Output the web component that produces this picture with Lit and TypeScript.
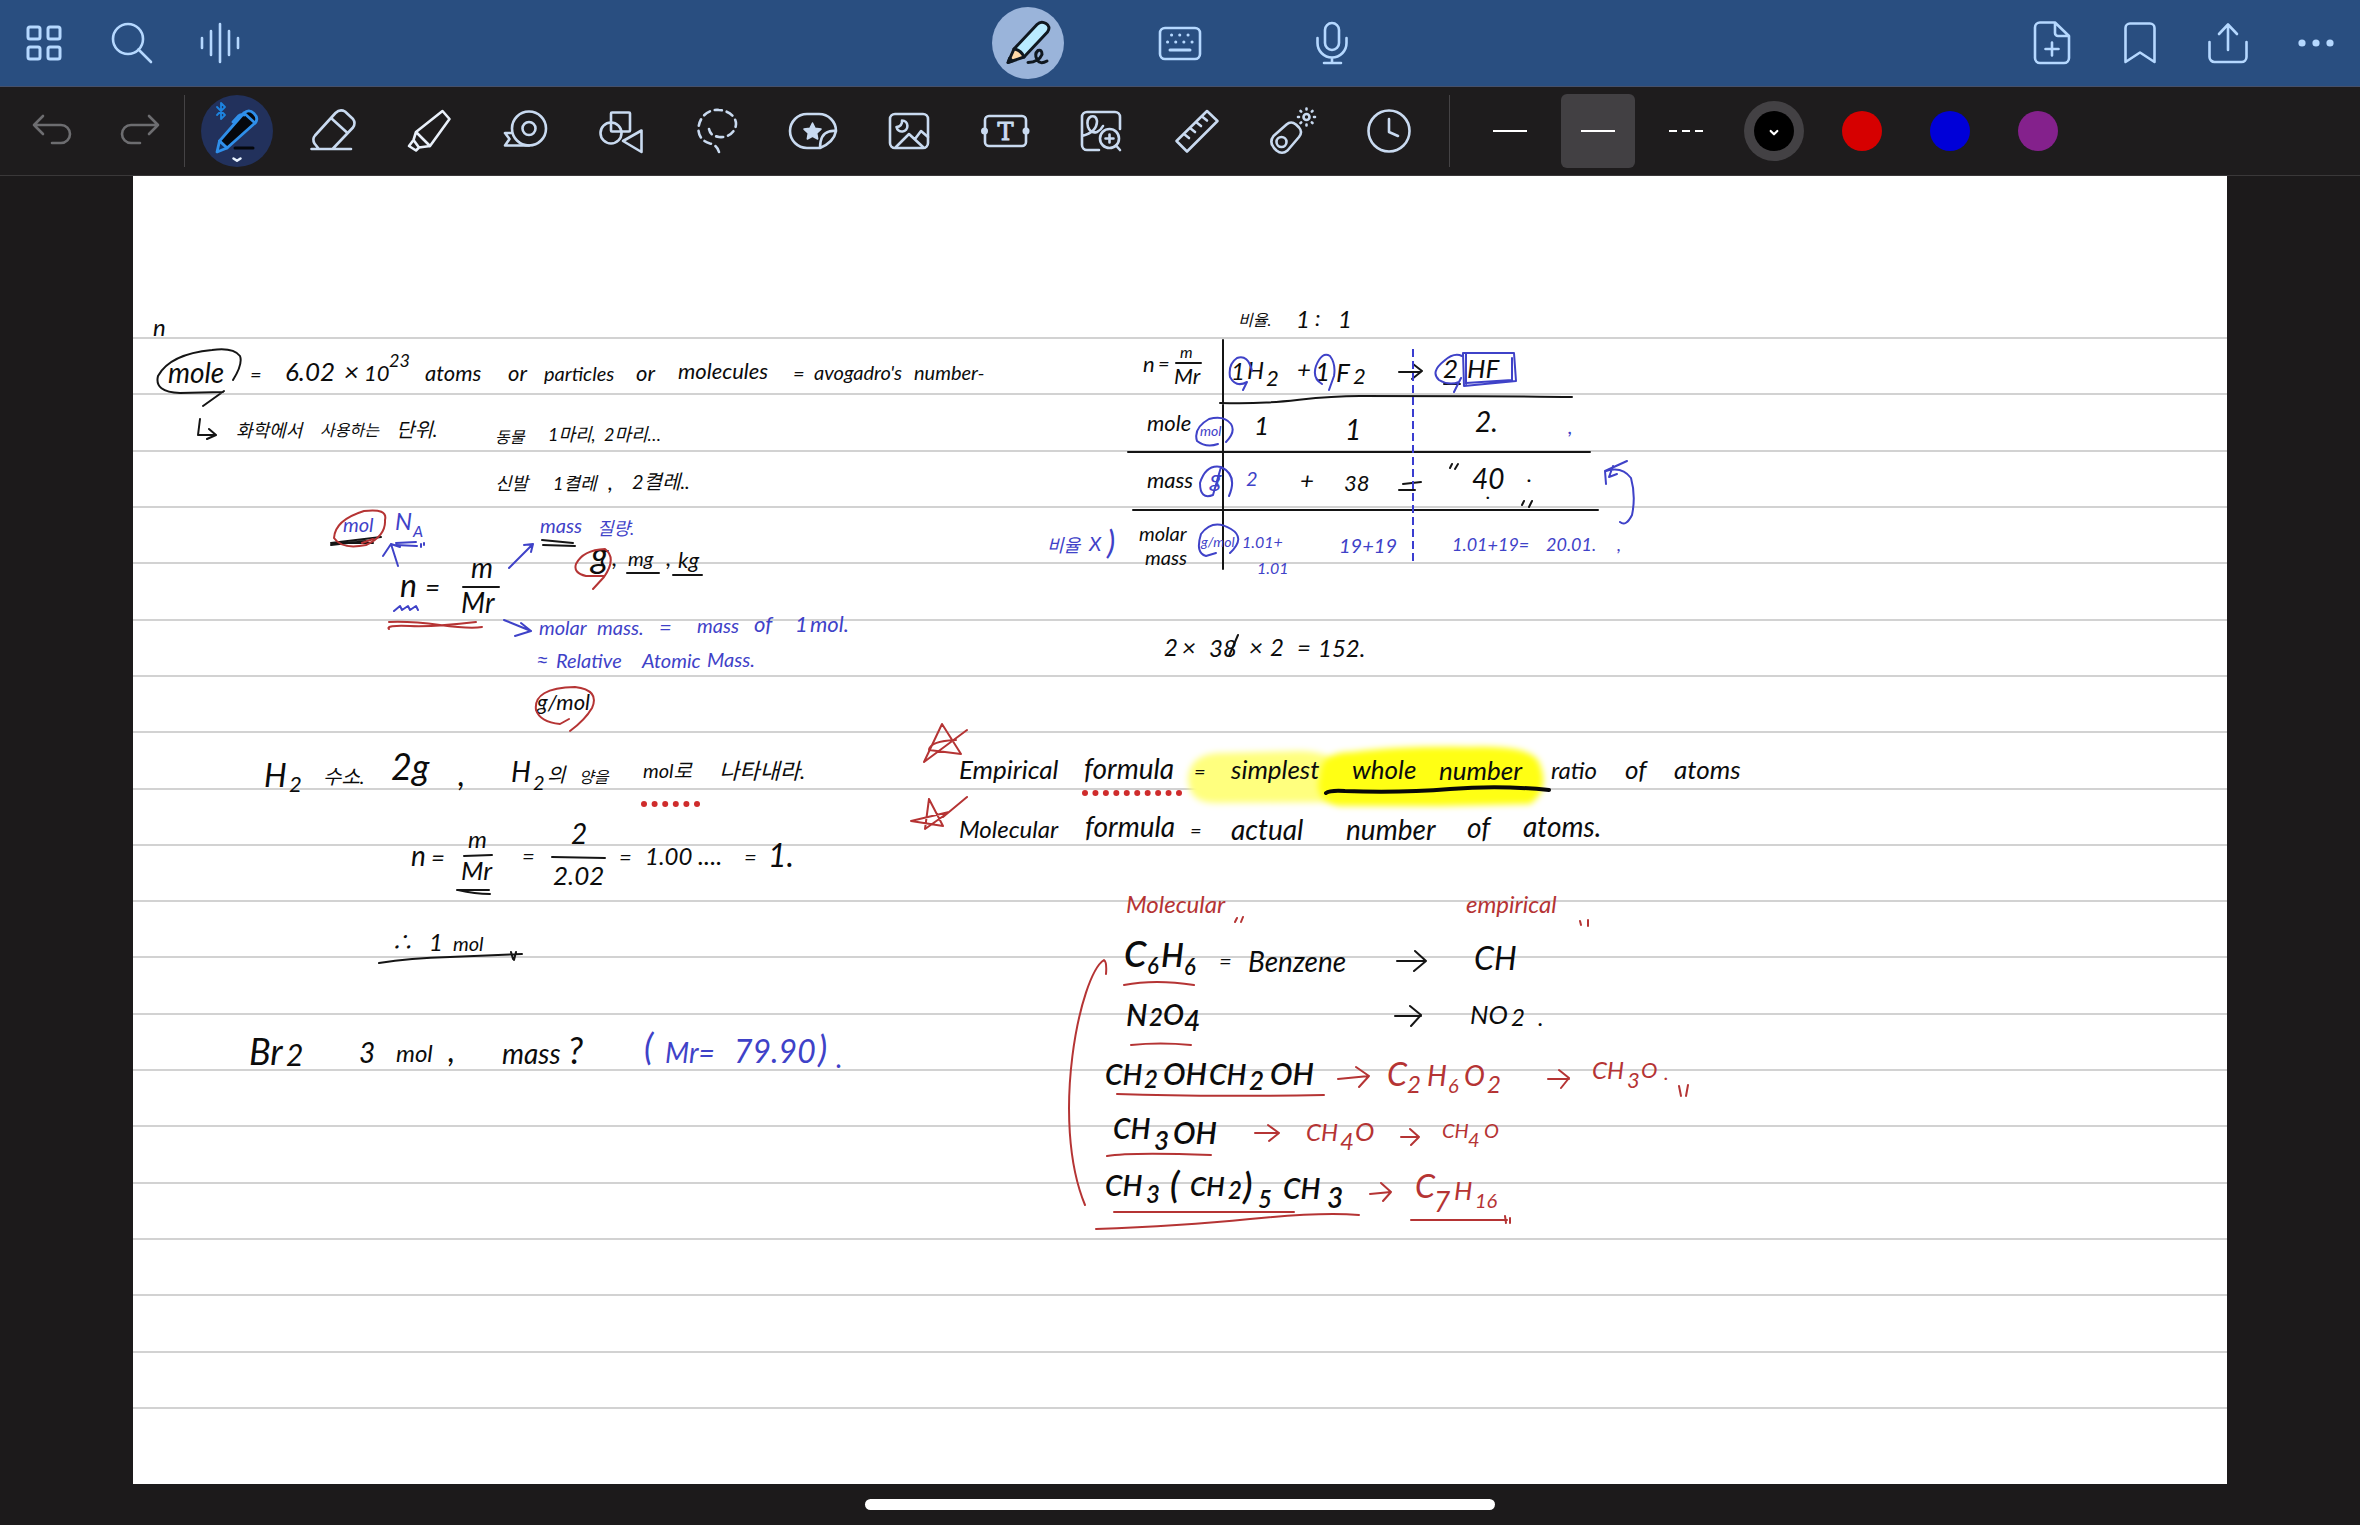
import { LitElement, html, svg, css } from "lit";
import type { SVGTemplateResult } from "lit";
import { customElement, state } from "lit/decorators.js";
import { classMap } from "lit/directives/class-map.js";

type Ink = "k" | "b" | "r" | "h";
type Word = [x: number, y: number, size: number, text: string];
type Tool = { name: string; icon: SVGTemplateResult };

const leftActions: Tool[] = [
  {
    name: "Documents",
    icon: svg`<g stroke-width="3"><rect x="8" y="8" width="12" height="12" rx="2"/><rect x="28" y="8" width="12" height="12" rx="2"/><rect x="8" y="28" width="12" height="12" rx="2"/><rect x="28" y="28" width="12" height="12" rx="2"/></g>`,
  },
  { name: "Search", icon: svg`<circle cx="20" cy="20" r="15"/><path d="M30.5 30.5 43 43"/>` },
  { name: "Audio", icon: svg`<path d="M6 19v10M15 12v24M24 5v38M33 12v24M42 19v10"/>` },
];

const modes: Tool[] = [
  {
    name: "Draw",
    icon: svg`<g stroke="#101820" stroke-width="3"><path fill="#b9ecff" d="M10 30 33 5.5Q37 1.500 42 4.5T43.5 13L20 38Z"/><path fill="#ffd9a8" d="M10 30 4 43.5 20 38Q17 31 10 30Z"/><path d="M24 43.5Q35 43 38 35.5 38 30 34 31.5 30 35 33 40.5T43 42"/></g><path d="M4 43.5 5.5 39 8.5 42Z" fill="#101820" stroke="#101820"/>`,
  },
  {
    name: "Keyboard",
    icon: svg`<rect x="4" y="9" width="40" height="31" rx="5"/><path stroke-width="3" d="M15.5 16h.1M23.7 16h.1M32 16h.1M11.5 23h.1M19.7 23h.1M27.8 23h.1M36 23h.1M14 31h20"/>`,
  },
  {
    name: "Voice",
    icon: svg`<rect x="17" y="4" width="14" height="27" rx="7"/><path d="M9.5 19v5a14.5 14.5 0 0 0 29 0v-5M24 39v5M16 44h17" />`,
  },
];

const rightActions: Tool[] = [
  {
    name: "Add page",
    icon: svg`<path d="M27 3.5H12a5 5 0 0 0-5 5V39a5 5 0 0 0 5 5H36a5 5 0 0 0 5-5V17ZM27 3.5V14a3 3 0 0 0 3 3H41M24 23.5v13M17.5 30h13"/>`,
  },
  { name: "Bookmark", icon: svg`<path d="M9.5 43V9a4.5 4.5 0 0 1 4.5-4.5H34A4.5 4.5 0 0 1 38.5 9V43L24 33.5Z"/>` },
  { name: "Share", icon: svg`<path d="M24 31V5.5M15 15 24 5.5 33 15M5.5 23V38a5 5 0 0 0 5 5H37.5a5 5 0 0 0 5-5V23"/>` },
  { name: "More", icon: svg`<g fill="currentColor" stroke="none"><circle cx="10" cy="24" r="3.6"/><circle cx="24" cy="24" r="3.6"/><circle cx="38" cy="24" r="3.6"/></g>` },
];

const history: Tool[] = [
  { name: "Undo", icon: svg`<path d="M15 9 6 18 15 27M6 18H33a9 9 0 0 1 0 18H24"/>` },
  { name: "Redo", icon: svg`<path d="M33 9 42 18 33 27M42 18H15a9 9 0 0 0 0 18H24"/>` },
];

const tools: Tool[] = [
  {
    name: "Pen",
    icon: svg`<path stroke="#1d84e0" stroke-width="1.800" d="M4 0 12 8 8 12V-4L12 0 4 8"/>
      <g stroke="#2f8fea" stroke-width="2.800"><path fill="#05070c" d="M6.500 34 31 6Q36 1.500 41 6.500T42 16L14 41Z"/><path fill="#14305f" d="M6.500 34 4 45 14 41Z"/><path d="M31 6 42 16M20 15 26 8.500Q28 7 31 8"/></g>
      <path stroke="#05070c" stroke-width="3" d="M22 41H40"/><path stroke="#e8f2ff" stroke-width="2.500" d="M20.500 51.500 24 53.800 27.500 51.500"/>`,
  },
  { name: "Eraser", icon: svg`<path d="M2.5 42H42M9.5 41.5 5.5 36.5Q3 32 6 28.5L26.5 6Q31 1.500 36 4.5L44 12Q47 16 44 20.5L24 41.5M22 11 38.500 26"/>` },
  { name: "Highlighter", icon: svg`<path stroke="#e9f0fa" d="M11 25 37.500 4 44.500 12 25 39 14 40.500M11 25 8.500 33 4 39 11 43.500 14 40.500 8.500 33M11 25 25 39"/>` },
  { name: "Tape", icon: svg`<circle cx="28" cy="21.500" r="17"/><circle cx="28" cy="21.500" r="6.500"/><path d="M28 38.500H4L8.500 32 4 26H11"/>` },
  { name: "Shapes", icon: svg`<rect x="14" y="5.500" width="19" height="19" rx="1"/><circle cx="14" cy="26" r="10.500"/><path d="M44.500 23.500V45L26 34Z"/>` },
  { name: "Lasso", icon: svg`<path stroke-dasharray="7 5" d="M26 45Q24 38 17 36.500C8 34 5 27 5.500 21 6.500 9 16 2 26 3 36 3.500 43 10 43 17 42.500 26 34 31 26 30 20 29 17 27 16 22"/>` },
  {
    name: "Sticker",
    icon: svg`<path d="M31 41H18A17 17 0 0 1 18 7H30A17 17 0 0 1 47 24Q45 35 31 41ZM31 41Q31 27 40 24.500 43 23.500 47 24"/><path stroke-width="1.500" fill="currentColor" d="m23.500 16 2.600 5.300 5.900.800-4.300 4.100 1 5.800-5.200-2.700-5.200 2.700 1-5.800-4.300-4.100 5.900-.800Z"/>`,
  },
  { name: "Image", icon: svg`<rect x="5" y="7" width="38" height="34" rx="5"/><path d="M17 13.500A5.500 5.500 0 1 1 11.500 20 5.500 5.500 0 0 0 17 13.500M11 40 24 27 38 40M30 32 36 24 43 30"/>` },
  {
    name: "Text",
    icon: svg`<rect x="4" y="9" width="41" height="30" rx="4"/><g fill="currentColor" stroke="none"><circle cx="3.500" cy="24" r="3.500"/><circle cx="45" cy="24" r="3.500"/></g><text class="glyph" x="24.500" y="33" text-anchor="middle">T</text>`,
  },
  {
    name: "Magnify",
    icon: svg`<path d="M22 43H10a5 5 0 0 1-5-5V10a5 5 0 0 1 5-5H38a5 5 0 0 1 5 5V22M5 29Q20 25 20 14 19 8 14 9.500 9 12 11 20 14 27 20 25 24 23 26 19"/><circle cx="32.500" cy="31.500" r="9.500"/><path d="M39 38.500 43 43M28.500 31.500h8M32.500 27.500v8"/>`,
  },
  { name: "Ruler", icon: svg`<path d="M34 4 44.500 14 14 44.500 3.500 34ZM11 27 16 31M17 21 22 25M23 15 28 19M29 9.500 34 13.500"/>` },
  {
    name: "Laser pointer",
    icon: svg`<path d="M4.500 29 17.500 17.500Q22 13.500 27 17.500L30 20.500Q34 25 30 30L18.500 43.500Q13 48 7.500 43.500L5 41Q0 35 4.500 29Z"/><circle cx="12.500" cy="35" r="5"/><circle cx="37.500" cy="10" r="3"/><path stroke-width="2.600" d="M37.500 1.500v1M37.500 17.500v1M29 10h1M45 10h1M31.500 4l.7.7M42.800 15.300l.7.7M43.500 4l-.7.7M32.200 15.300l-.7.7"/>`,
  },
  { name: "Recent", icon: svg`<circle cx="24" cy="24" r="20.500"/><path d="M24 12V25L33 29"/>` },
];

const strokes = [
  { name: "Solid line, thin", d: "M7 24H41" },
  { name: "Solid line", d: "M7 24H41" },
  { name: "Dashed line", d: "M7 24h8M20 24h8M33 24h8" },
];

const swatches = ["black", "red", "blue", "purple"];

const ruleCount = 20;
const rules = Array.from({ length: ruleCount }, (_, i) => Math.round(338 + (i * 1070) / (ruleCount - 1)));

const words: Record<Ink, Word[]> = {
  k: [
    [153, 336, 24, "n"], [168, 383, 28, "mole"], [250, 382, 20, "="], [285, 381, 26, "6.02"], [344, 381, 26, "×"],
    [364, 381, 22, "10"], [389, 367, 18, "23"], [425, 381, 22, "atoms"], [508, 381, 22, "or"], [544, 381, 20, "particles"],
    [636, 381, 22, "or"], [678, 379, 22, "molecules"], [793, 381, 20, "="], [814, 380, 20, "avogadro's"], [914, 380, 20, "number-"],
    [236, 437, 18, "화학에서"], [320, 436, 16, "사용하는"], [396, 437, 20, "단위."],
    [495, 443, 16, "동물"], [548, 441, 18, "1마리,"], [604, 441, 18, "2마리…"],
    [495, 490, 18, "신발"], [553, 490, 18, "1켤레"], [608, 490, 22, ","], [632, 489, 20, "2켤레.."],
    [591, 568, 36, "g"], [612, 566, 24, ","], [628, 566, 20, "mg"], [666, 566, 24, ","], [678, 568, 22, "kg"],
    [400, 597, 32, "n"], [425, 597, 26, "="], [471, 578, 28, "m"], [461, 613, 28, "Mr"],
    [537, 710, 22, "g/mol"],
    [1238, 326, 16, "비율."], [1296, 328, 24, "1"], [1315, 326, 22, ":"], [1338, 328, 24, "1"],
    [1143, 372, 22, "n"], [1158, 371, 20, "="], [1180, 358, 16, "m"], [1174, 384, 22, "Mr"],
    [1231, 380, 24, "1"], [1247, 379, 24, "H"], [1266, 386, 22, "2"], [1297, 378, 24, "+"], [1315, 381, 26, "1"],
    [1336, 382, 26, "F"], [1353, 384, 22, "2"], [1443, 378, 26, "2"], [1467, 378, 26, "HF"],
    [1147, 431, 22, "mole"], [1254, 435, 26, "1"], [1345, 440, 28, "1"], [1475, 432, 28, "2."],
    [1147, 488, 22, "mass"], [1300, 489, 24, "+"], [1344, 491, 22, "38"], [1472, 489, 28, "40"], [1527, 482, 22, "."], [1486, 499, 20, "."],
    [1139, 541, 20, "molar"], [1145, 565, 20, "mass"],
    [1164, 656, 24, "2"], [1182, 656, 24, "×"], [1209, 657, 24, "38"], [1249, 656, 24, "×"], [1270, 656, 24, "2"], [1297, 656, 24, "="], [1318, 657, 24, "152."],
    [264, 787, 32, "H"], [289, 792, 22, "2"], [323, 784, 20, "수소."], [391, 780, 36, "2g"], [458, 786, 32, ","],
    [511, 782, 28, "H"], [533, 790, 20, "2"], [547, 782, 20, "의"], [579, 783, 16, "양을"], [643, 778, 20, "mol로"], [719, 779, 22, "나타내라."],
    [411, 866, 28, "n"], [431, 866, 24, "="], [468, 848, 24, "m"], [461, 880, 26, "Mr"], [522, 864, 22, "="], [571, 844, 28, "2"],
    [553, 885, 26, "2.02"], [619, 865, 22, "="], [645, 865, 24, "1.00"], [698, 865, 26, "...."], [744, 865, 22, "="], [768, 867, 32, "1."],
    [391, 950, 22, "∴"], [429, 951, 24, "1"], [453, 951, 20, "mol"],
    [249, 1065, 36, "Br"], [286, 1066, 30, "2"], [359, 1063, 28, "3"], [396, 1062, 24, "mol"], [448, 1062, 32, ","],
    [502, 1064, 28, "mass"], [568, 1064, 36, "?"],
    [959, 779, 26, "Empirical"], [1084, 779, 28, "formula"], [1194, 779, 20, "="], [1231, 779, 26, "simplest"], [1352, 779, 26, "whole"],
    [1439, 780, 26, "number"], [1551, 779, 24, "ratio"], [1625, 779, 26, "of"], [1674, 779, 26, "atoms"],
    [959, 838, 24, "Molecular"], [1085, 837, 28, "formula"], [1190, 838, 20, "="], [1231, 840, 28, "actual"], [1346, 840, 28, "number"],
    [1467, 838, 28, "of"], [1523, 837, 28, "atoms."],
    [1219, 969, 22, "="], [1248, 972, 28, "Benzene"], [1474, 970, 32, "CH"], [1470, 1024, 26, "NO"], [1511, 1026, 24, "2"], [1538, 1026, 24, "."],
  ],
  b: [
    [343, 532, 20, "mol"], [395, 530, 24, "N"], [413, 537, 16, "A"], [540, 533, 20, "mass"], [597, 535, 18, "질량."],
    [539, 635, 20, "molar"], [597, 635, 20, "mass."], [659, 635, 22, "="], [697, 633, 20, "mass"], [754, 632, 22, "of"], [795, 632, 22, "1"], [810, 632, 22, "mol."],
    [536, 667, 22, "≈"], [556, 668, 20, "Relative"], [642, 668, 20, "Atomic"], [707, 667, 20, "Mass."],
    [1200, 436, 14, "mol"], [1568, 434, 20, ","], [1210, 487, 24, "g"], [1246, 486, 20, "2"],
    [1047, 552, 18, "비율"], [1089, 551, 20, "X"], [1107, 554, 32, ")"], [1201, 547, 14, "g/mol"],
    [1242, 548, 16, "1.01+"], [1257, 574, 16, "1.01"], [1339, 553, 20, "19+19"], [1452, 551, 18, "1.01+19="], [1546, 551, 18, "20.01."], [1617, 551, 18, ","],
    [644, 1060, 36, "("], [665, 1063, 28, "Mr="], [734, 1063, 32, "79.90"], [818, 1062, 36, ")"], [836, 1068, 28, "."],
  ],
  r: [
    [1126, 913, 24, "Molecular"], [1466, 913, 24, "empirical"],
    [1387, 1086, 32, "C"], [1407, 1093, 24, "2"], [1427, 1086, 28, "H"], [1448, 1093, 20, "6"], [1464, 1086, 28, "O"], [1487, 1093, 24, "2"],
    [1592, 1079, 24, "CH"], [1627, 1088, 22, "3"], [1641, 1078, 22, "O"], [1664, 1080, 20, "."],
    [1306, 1141, 24, "CH"], [1340, 1150, 24, "4"], [1355, 1141, 26, "O"], [1442, 1138, 20, "CH"], [1468, 1147, 20, "4"], [1484, 1138, 20, "O"],
    [1415, 1198, 32, "C"], [1434, 1212, 28, "7"], [1454, 1200, 26, "H"], [1475, 1208, 20, "16"],
  ],
  h: [
    [1124, 967, 36, "C"], [1147, 974, 22, "6"], [1161, 967, 32, "H"], [1184, 975, 22, "6"],
    [1126, 1026, 30, "N"], [1149, 1026, 24, "2"], [1163, 1025, 28, "O"], [1184, 1031, 28, "4"],
    [1105, 1085, 28, "CH"], [1144, 1088, 24, "2"], [1163, 1085, 30, "OH"], [1209, 1085, 28, "CH"], [1249, 1090, 26, "2"], [1270, 1085, 30, "OH"],
    [1113, 1139, 28, "CH"], [1154, 1150, 26, "3"], [1173, 1144, 30, "OH"],
    [1105, 1196, 28, "CH"], [1146, 1203, 24, "3"], [1170, 1198, 36, "("], [1190, 1196, 26, "CH"], [1228, 1199, 24, "2"], [1243, 1199, 36, ")"],
    [1258, 1208, 24, "5"], [1283, 1199, 28, "CH"], [1327, 1208, 28, "3"],
  ],
};

const marks: Record<Ink, string> = {
  k: `M233 380Q243 364 240 356 233 347 212 350 170 354 158 376 154 392 180 393L223 392M224 391 203 406
    M200 419 198 435H215M209 429 216 435 207 439
    M331 543 381 537M331 543 373 543M331 545 366 541M542 540 573 543M543 545 575 546
    M627 573H659M673 575H702M463 587H499
    M1176 363H1201M1223 340V569M1220 403C1290 405 1300 396 1360 396S1530 396 1572 397M1128 452H1590M1133 510H1598
    M1399 372H1421M1413 364 1422 371 1412 379M1403 484 1421 482M1399 490H1415M1444 384 1460 384
    M1452 464 1450 468M1458 464 1455 469M1524 501 1522 505M1532 501 1529 507M1238 635 1229 656
    M464 856 492 855M552 857 605 858M457 890H489M458 890Q475 894 490 894
    M379 963Q410 958 450 957L522 954M511 952 513 959M516 952 514 960
    M1397 961H1426M1415 951 1426 961 1414 971M1395 1016H1421M1410 1006 1421 1015 1411 1026`,
  b: `M398 566 391 544M383 556 391 544 400 547M396 543 416 542M396 545 417 546M421 544V547M424 543V545
    M509 568 533 544M524 545 533 544 531 552M504 620 531 631M521 623 531 631 515 636
    M394 611 400 606 402 610 408 606 410 610 416 606 418 610
    M1252 371Q1248 354 1237 358 1228 364 1230 377 1236 388 1247 382L1243 390
    M1322 384Q1312 378 1316 366 1322 351 1330 356 1336 364 1334 376L1329 390
    M1462 356Q1454 352 1444 361 1430 372 1439 380 1449 386 1459 382M1461 378 1454 392
    M1463 353 1514 353 1516 381 1464 386ZM1466 354V384M1512 358V380L1466 383
    M1231 424Q1224 415 1209 419 1193 428 1197 441 1206 448 1218 444M1231 424Q1236 432 1226 442
    M1221 467Q1206 464 1200 483 1200 500 1213 495L1221 467M1221 467Q1238 475 1229 496
    M1231 529Q1213 518 1201 534 1195 553 1206 556L1216 553M1231 529Q1246 538 1230 553
    M1620 522Q1626 527 1632 515 1636 496 1631 478 1622 466 1606 471M1627 461 1605 471 1606 484M1613 466 1609 477 1617 474`,
  r: `M385 520Q388 508 364 511 335 520 334 538 342 550 366 545 386 536 385 520M362 543 373 539
    M389 622Q410 621 440 625T482 627M389 629Q385 625 410 626T476 622
    M604 576 586 576Q573 573 576 564 583 550 605 549 617 558 604 577L593 589
    M536 710Q533 688 575 687 600 690 592 708 585 720 570 731M536 710Q540 722 560 724L569 719
    M924 762 942 724 961 754 929 750Q930 741 956 740M924 762 967 730
    M929 799 943 826 911 821 949 812 925 829 929 799M967 797 943 817
    M1237 918 1235 922M1243 917 1241 922M1580 921 1581 925M1588 920V926
    M1124 985Q1155 979 1194 985M1131 1045Q1160 1042 1191 1045M1117 1094Q1200 1097 1324 1095M1107 1156Q1130 1152 1211 1155
    M1114 1212H1294M1096 1229Q1180 1226 1250 1219T1359 1215M1411 1220H1507M1505 1216 1506 1223M1510 1218V1223
    M1106 974Q1107 962 1104 960C1080 975 1050 1120 1085 1205
    M1338 1079 1369 1076M1356 1067 1369 1076 1359 1087M1548 1079H1569M1559 1070 1569 1078 1561 1088
    M1679 1086 1681 1096M1688 1085 1686 1096
    M1255 1133H1279M1268 1125 1279 1133 1269 1141M1401 1137H1419M1410 1129 1419 1137 1411 1145
    M1370 1194 1391 1192M1381 1183 1391 1192 1383 1201`,
  h: "",
};

const dots = [
  ...Array.from({ length: 6 }, (_, i) => [644 + (i * 53) / 5, 804]),
  ...Array.from({ length: 10 }, (_, i) => [1085 + (i * 94) / 9, 793]),
];

@customElement("note-page")
class NotePage extends LitElement {
  static styles = css`
    :host { display: block; background: #fff; }
    .sheet { display: block; width: 100%; height: auto; }
    .rule { stroke: #d2d2d2; stroke-width: 2; }
    .word {
      font-family: Lato, "Noto Sans CJK KR", sans-serif;
      font-style: italic;
      font-weight: 400;
    }
    .mark { fill: none; stroke-width: 2; stroke-linecap: round; stroke-linejoin: round; }
    .word.k, .word.h { fill: #0c0c0c; }
    .word.b { fill: #3f42c8; }
    .word.r { fill: #b53434; }
    .word.r, .word.b { font-weight: 400; }
    .word.h { font-weight: 600; }
    .mark.k { stroke: #151515; }
    .mark.b { stroke: #3f42c8; }
    .mark.r { stroke: #b53434; }
    .divider { stroke: #3a3dd0; stroke-width: 2; stroke-dasharray: 8 4; }
    .dot { fill: #cf2c2c; }
    .pale { fill: #ffff7e; filter: blur(3px); }
    .bright { fill: #ffff14; filter: blur(3px); }
    .thick { fill: none; stroke: #080808; stroke-width: 4; stroke-linecap: round; }
  `;

  render() {
    const inks: Ink[] = ["k", "b", "r", "h"];
    return html`<svg class="sheet" viewBox="133 176 2094 1308" role="img" aria-label="Chemistry notes">
      ${rules.map((y) => svg`<line class="rule" x1="133" x2="2227" y1=${y} y2=${y}/>`)}
      <path class="pale" d="M1188 778Q1190 752 1225 753L1300 751Q1340 752 1340 775V802L1215 803Q1188 803 1188 778Z"/>
      <path class="bright" d="M1320 775Q1320 752 1352 752 1400 746 1470 747 1530 745 1539 762 1551 790 1530 804L1440 806 1340 806Q1312 800 1320 775Z"/>
      ${inks.map((ink) => svg`
        <path class="mark ${ink}" d=${marks[ink]}/>
        ${words[ink].map(([x, y, size, text]) => svg`<text class="word ${ink}" x=${x} y=${y} font-size=${size}>${text}</text>`)}
      `)}
      <line class="divider" x1="1413" x2="1413" y1="349" y2="562"/>
      <path class="thick" d="M1326 793Q1330 790 1345 791 1400 793 1450 789T1549 790"/>
      ${dots.map(([x, y]) => svg`<circle class="dot" cx=${x} cy=${y} r="3"/>`)}
    </svg>`;
  }
}

@customElement("app-root")
class AppRoot extends LitElement {
  static styles = css`
    :host {
      display: flex;
      flex-direction: column;
      min-height: 100vh;
      background: #1c1a1b;
      font-family: "Liberation Sans", sans-serif;
    }
    button {
      display: grid;
      place-items: center;
      flex: none;
      width: 88px;
      height: 86px;
      padding: 0;
      border: 0;
      background: none;
      color: inherit;
      cursor: pointer;
    }
    .icon {
      width: 48px;
      height: 48px;
      overflow: visible;
      fill: none;
      stroke: currentColor;
      stroke-width: 2.6;
      stroke-linecap: round;
      stroke-linejoin: round;
    }
    .glyph { font: 24px "DejaVu Serif", serif; fill: currentColor; stroke-width: 1; }
    .header {
      display: grid;
      grid-template-columns: 1fr auto 1fr;
      background: #294e80;
      border-bottom: 1px solid #46506a;
      color: #b5d8ff;
    }
    .group { display: flex; }
    .group.modes { gap: 64px; }
    .group.end { justify-content: flex-end; }
    .disc {
      display: grid;
      place-items: center;
      width: 72px;
      height: 72px;
      border-radius: 50%;
    }
    .modes .on .disc { background: #9ab4da; }
    .toolbar {
      display: flex;
      align-items: center;
      height: 88px;
      padding-left: 8px;
      border-bottom: 1px solid #3a3839;
      background: #1e1c1d;
      color: #c9daf0;
    }
    .history { display: flex; color: #6d6d70; }
    .separator { width: 1px; height: 72px; background: #454345; }
    .tools { display: flex; margin: 0 12px 0 4px; }
    .tools button { width: 96px; }
    .tools .on .disc { background: #22315c; }
    .lines { display: flex; margin-left: 16px; color: #fff; }
    .line { display: grid; place-items: center; width: 74px; height: 74px; border-radius: 6px; }
    .on .line { background: #424043; }
    .lines .icon { stroke-width: 2; stroke-linecap: butt; }
    .swatches { display: flex; color: #fff; }
    .ring {
      display: grid;
      place-items: center;
      width: 60px;
      height: 60px;
      border-radius: 50%;
    }
    .on .ring { background: #434144; }
    .swatch { display: grid; place-items: center; width: 40px; height: 40px; border-radius: 50%; }
    .swatch .icon { width: 40px; height: 40px; }
    .black { background: #000; }
    .red { background: #d60000; }
    .blue { background: #0000d8; }
    .purple { background: #84218c; }
    .desk { padding: 0 133px; }
    .home { display: flex; flex: 1; align-items: center; justify-content: center; min-height: 41px; }
    .bar { width: 630px; height: 11px; border-radius: 6px; background: #fff; }
  `;

  @state() private mode = 0;
  @state() private tool = 0;
  @state() private line = 1;
  @state() private color = 0;

  private icon(content: unknown) {
    return html`<svg class="icon" viewBox="0 0 48 48" aria-hidden="true">${content}</svg>`;
  }

  private plain(list: Tool[]) {
    return list.map((t) => html`<button aria-label=${t.name}>${this.icon(t.icon)}</button>`);
  }

  render() {
    return html`
      <header class="header">
        <div class="group">${this.plain(leftActions)}</div>
        <div class="group modes">
          ${modes.map((m, i) => html`<button class=${classMap({ on: i === this.mode })} aria-label=${m.name} @click=${() => (this.mode = i)}>
            <span class="disc">${this.icon(m.icon)}</span>
          </button>`)}
        </div>
        <div class="group end">${this.plain(rightActions)}</div>
      </header>
      <nav class="toolbar" aria-label="Drawing tools">
        <div class="history">${this.plain(history)}</div>
        <span class="separator"></span>
        <div class="tools">
          ${tools.map((t, i) => html`<button class=${classMap({ on: i === this.tool })} aria-label=${t.name} @click=${() => (this.tool = i)}>
            <span class="disc">${this.icon(t.icon)}</span>
          </button>`)}
        </div>
        <span class="separator"></span>
        <div class="lines">
          ${strokes.map((s, i) => html`<button class=${classMap({ on: i === this.line })} aria-label=${s.name} @click=${() => (this.line = i)}>
            <span class="line">${this.icon(svg`<path d=${s.d}/>`)}</span>
          </button>`)}
        </div>
        <div class="swatches">
          ${swatches.map((c, i) => html`<button class=${classMap({ on: i === this.color })} aria-label=${c} @click=${() => (this.color = i)}>
            <span class="ring"><span class="swatch ${c}">
              ${i === this.color ? this.icon(svg`<path d="M20 24 24 28 28 24"/>`) : ""}
            </span></span>
          </button>`)}
        </div>
      </nav>
      <main class="desk"><note-page></note-page></main>
      <footer class="home"><span class="bar"></span></footer>
    `;
  }
}
